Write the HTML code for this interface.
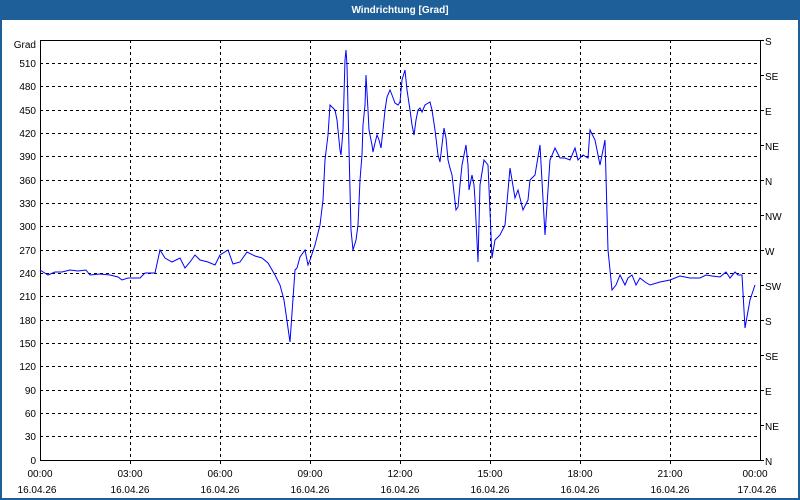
<!DOCTYPE html>
<html><head><meta charset="utf-8"><style>
html,body{margin:0;padding:0;width:800px;height:500px;overflow:hidden;background:#fff;font-family:"Liberation Sans",sans-serif;}
</style></head><body>
<svg width="800" height="500" xmlns="http://www.w3.org/2000/svg" font-family="Liberation Sans, sans-serif" font-size="10" fill="#000">
<rect x="0" y="0" width="800" height="500" fill="#1f5f99"/>
<rect x="2" y="20" width="796" height="478" fill="#fff"/>
<text x="400" y="13" text-anchor="middle" fill="#fff" font-weight="bold" font-size="10">Windrichtung [Grad]</text>
<g stroke="#000" stroke-dasharray="3,3" stroke-width="1">
<line x1="40" x2="760" y1="63.5" y2="63.5"/><line x1="40" x2="760" y1="86.5" y2="86.5"/><line x1="40" x2="760" y1="110.5" y2="110.5"/><line x1="40" x2="760" y1="133.5" y2="133.5"/><line x1="40" x2="760" y1="156.5" y2="156.5"/><line x1="40" x2="760" y1="180.5" y2="180.5"/><line x1="40" x2="760" y1="203.5" y2="203.5"/><line x1="40" x2="760" y1="226.5" y2="226.5"/><line x1="40" x2="760" y1="250.5" y2="250.5"/><line x1="40" x2="760" y1="273.5" y2="273.5"/><line x1="40" x2="760" y1="296.5" y2="296.5"/><line x1="40" x2="760" y1="320.5" y2="320.5"/><line x1="40" x2="760" y1="343.5" y2="343.5"/><line x1="40" x2="760" y1="366.5" y2="366.5"/><line x1="40" x2="760" y1="390.5" y2="390.5"/><line x1="40" x2="760" y1="413.5" y2="413.5"/><line x1="40" x2="760" y1="436.5" y2="436.5"/>
<line x1="130.5" x2="130.5" y1="40" y2="460"/><line x1="220.5" x2="220.5" y1="40" y2="460"/><line x1="310.5" x2="310.5" y1="40" y2="460"/><line x1="400.5" x2="400.5" y1="40" y2="460"/><line x1="490.5" x2="490.5" y1="40" y2="460"/><line x1="580.5" x2="580.5" y1="40" y2="460"/><line x1="670.5" x2="670.5" y1="40" y2="460"/>
</g>
<rect x="40.5" y="40.5" width="720" height="420" fill="none" stroke="#000"/>
<polyline fill="none" stroke="#0000ff" stroke-width="1" points="40,270 48,275 55,272 62,272 70,270 78,271 86,270 90,275 100,274 110,275 118,277 122,280 128,278 140,278 145,273 155,273 160,250 165,258 172,262 180,258 185,268 190,262 195,255 200,260 208,262 215,265 220,255 228,250 233,264 240,262 247,252 255,256 262,258 268,263 275,275 280,285 284,300 290,342 295,270 297,268 300,257 305,250 308,265 310,260 315,245 320,225 323,200 325,160 328,135 330,105 335,110 337,120 340,150 341,155 343,130 345,60 346,50 347,65 350,190 351,230 353,250 356,240 358,225 360,180 362,155 363,125 365,105 366,75 368,110 369,130 372,145 373,152 375,143 377,135 379,140 381,148 383,130 385,110 387,97 390,90 392,95 395,103 398,105 400,102 402,80 405,70 407,90 410,110 412,125 414,135 416,120 418,110 420,108 422,112 425,105 430,102 432,110 435,130 438,155 440,162 442,145 444,128 446,138 448,160 450,168 452,175 456,210 458,207 460,185 462,165 464,155 466,145 468,165 469,190 472,175 474,185 475,200 478,262 480,185 484,160 488,165 492,258 495,240 500,235 505,225 510,168 515,198 518,190 523,210 528,200 530,180 535,175 540,145 545,235 550,160 555,148 560,158 565,158 570,160 575,148 578,160 583,155 588,158 590,130 595,140 600,165 605,140 608,250 612,290 616,285 620,275 625,285 628,278 632,275 636,285 640,278 645,282 650,285 660,282 670,280 680,276 690,278 700,278 706,275 712,276 720,277 726,272 730,278 735,272 738,275 742,275 745,328 750,300 755,285"/>
<g text-anchor="end">
<text x="36" y="48">Grad</text>
<text x="36" y="67">510</text><text x="36" y="90">480</text><text x="36" y="114">450</text><text x="36" y="137">420</text><text x="36" y="160">390</text><text x="36" y="184">360</text><text x="36" y="207">330</text><text x="36" y="230">300</text><text x="36" y="254">270</text><text x="36" y="277">240</text><text x="36" y="300">210</text><text x="36" y="324">180</text><text x="36" y="347">150</text><text x="36" y="370">120</text><text x="36" y="394">90</text><text x="36" y="417">60</text><text x="36" y="440">30</text><text x="36" y="464">0</text>
</g>
<g stroke="#000"><line x1="760" x2="764" y1="40.5" y2="40.5"/><line x1="760" x2="764" y1="75.5" y2="75.5"/><line x1="760" x2="764" y1="110.5" y2="110.5"/><line x1="760" x2="764" y1="145.5" y2="145.5"/><line x1="760" x2="764" y1="180.5" y2="180.5"/><line x1="760" x2="764" y1="215.5" y2="215.5"/><line x1="760" x2="764" y1="250.5" y2="250.5"/><line x1="760" x2="764" y1="285.5" y2="285.5"/><line x1="760" x2="764" y1="320.5" y2="320.5"/><line x1="760" x2="764" y1="355.5" y2="355.5"/><line x1="760" x2="764" y1="390.5" y2="390.5"/><line x1="760" x2="764" y1="425.5" y2="425.5"/><line x1="760" x2="764" y1="460.5" y2="460.5"/>
<line x1="130.5" x2="130.5" y1="460" y2="464"/><line x1="220.5" x2="220.5" y1="460" y2="464"/><line x1="310.5" x2="310.5" y1="460" y2="464"/><line x1="400.5" x2="400.5" y1="460" y2="464"/><line x1="490.5" x2="490.5" y1="460" y2="464"/><line x1="580.5" x2="580.5" y1="460" y2="464"/><line x1="670.5" x2="670.5" y1="460" y2="464"/></g>
<g>
<text x="765" y="45">S</text><text x="765" y="80">SE</text><text x="765" y="115">E</text><text x="765" y="150">NE</text><text x="765" y="185">N</text><text x="765" y="220">NW</text><text x="765" y="255">W</text><text x="765" y="290">SW</text><text x="765" y="325">S</text><text x="765" y="360">SE</text><text x="765" y="395">E</text><text x="765" y="430">NE</text><text x="765" y="465">N</text>
</g>
<g text-anchor="middle">
<text x="40" y="477">00:00</text><text x="130" y="477">03:00</text><text x="220" y="477">06:00</text><text x="310" y="477">09:00</text><text x="400" y="477">12:00</text><text x="490" y="477">15:00</text><text x="580" y="477">18:00</text><text x="670" y="477">21:00</text><text x="755" y="477">00:00</text>
<text x="37" y="493">16.04.26</text><text x="130" y="493">16.04.26</text><text x="220" y="493">16.04.26</text><text x="310" y="493">16.04.26</text><text x="400" y="493">16.04.26</text><text x="490" y="493">16.04.26</text><text x="580" y="493">16.04.26</text><text x="670" y="493">16.04.26</text><text x="757" y="493">17.04.26</text>
</g>
</svg>
</body></html>
